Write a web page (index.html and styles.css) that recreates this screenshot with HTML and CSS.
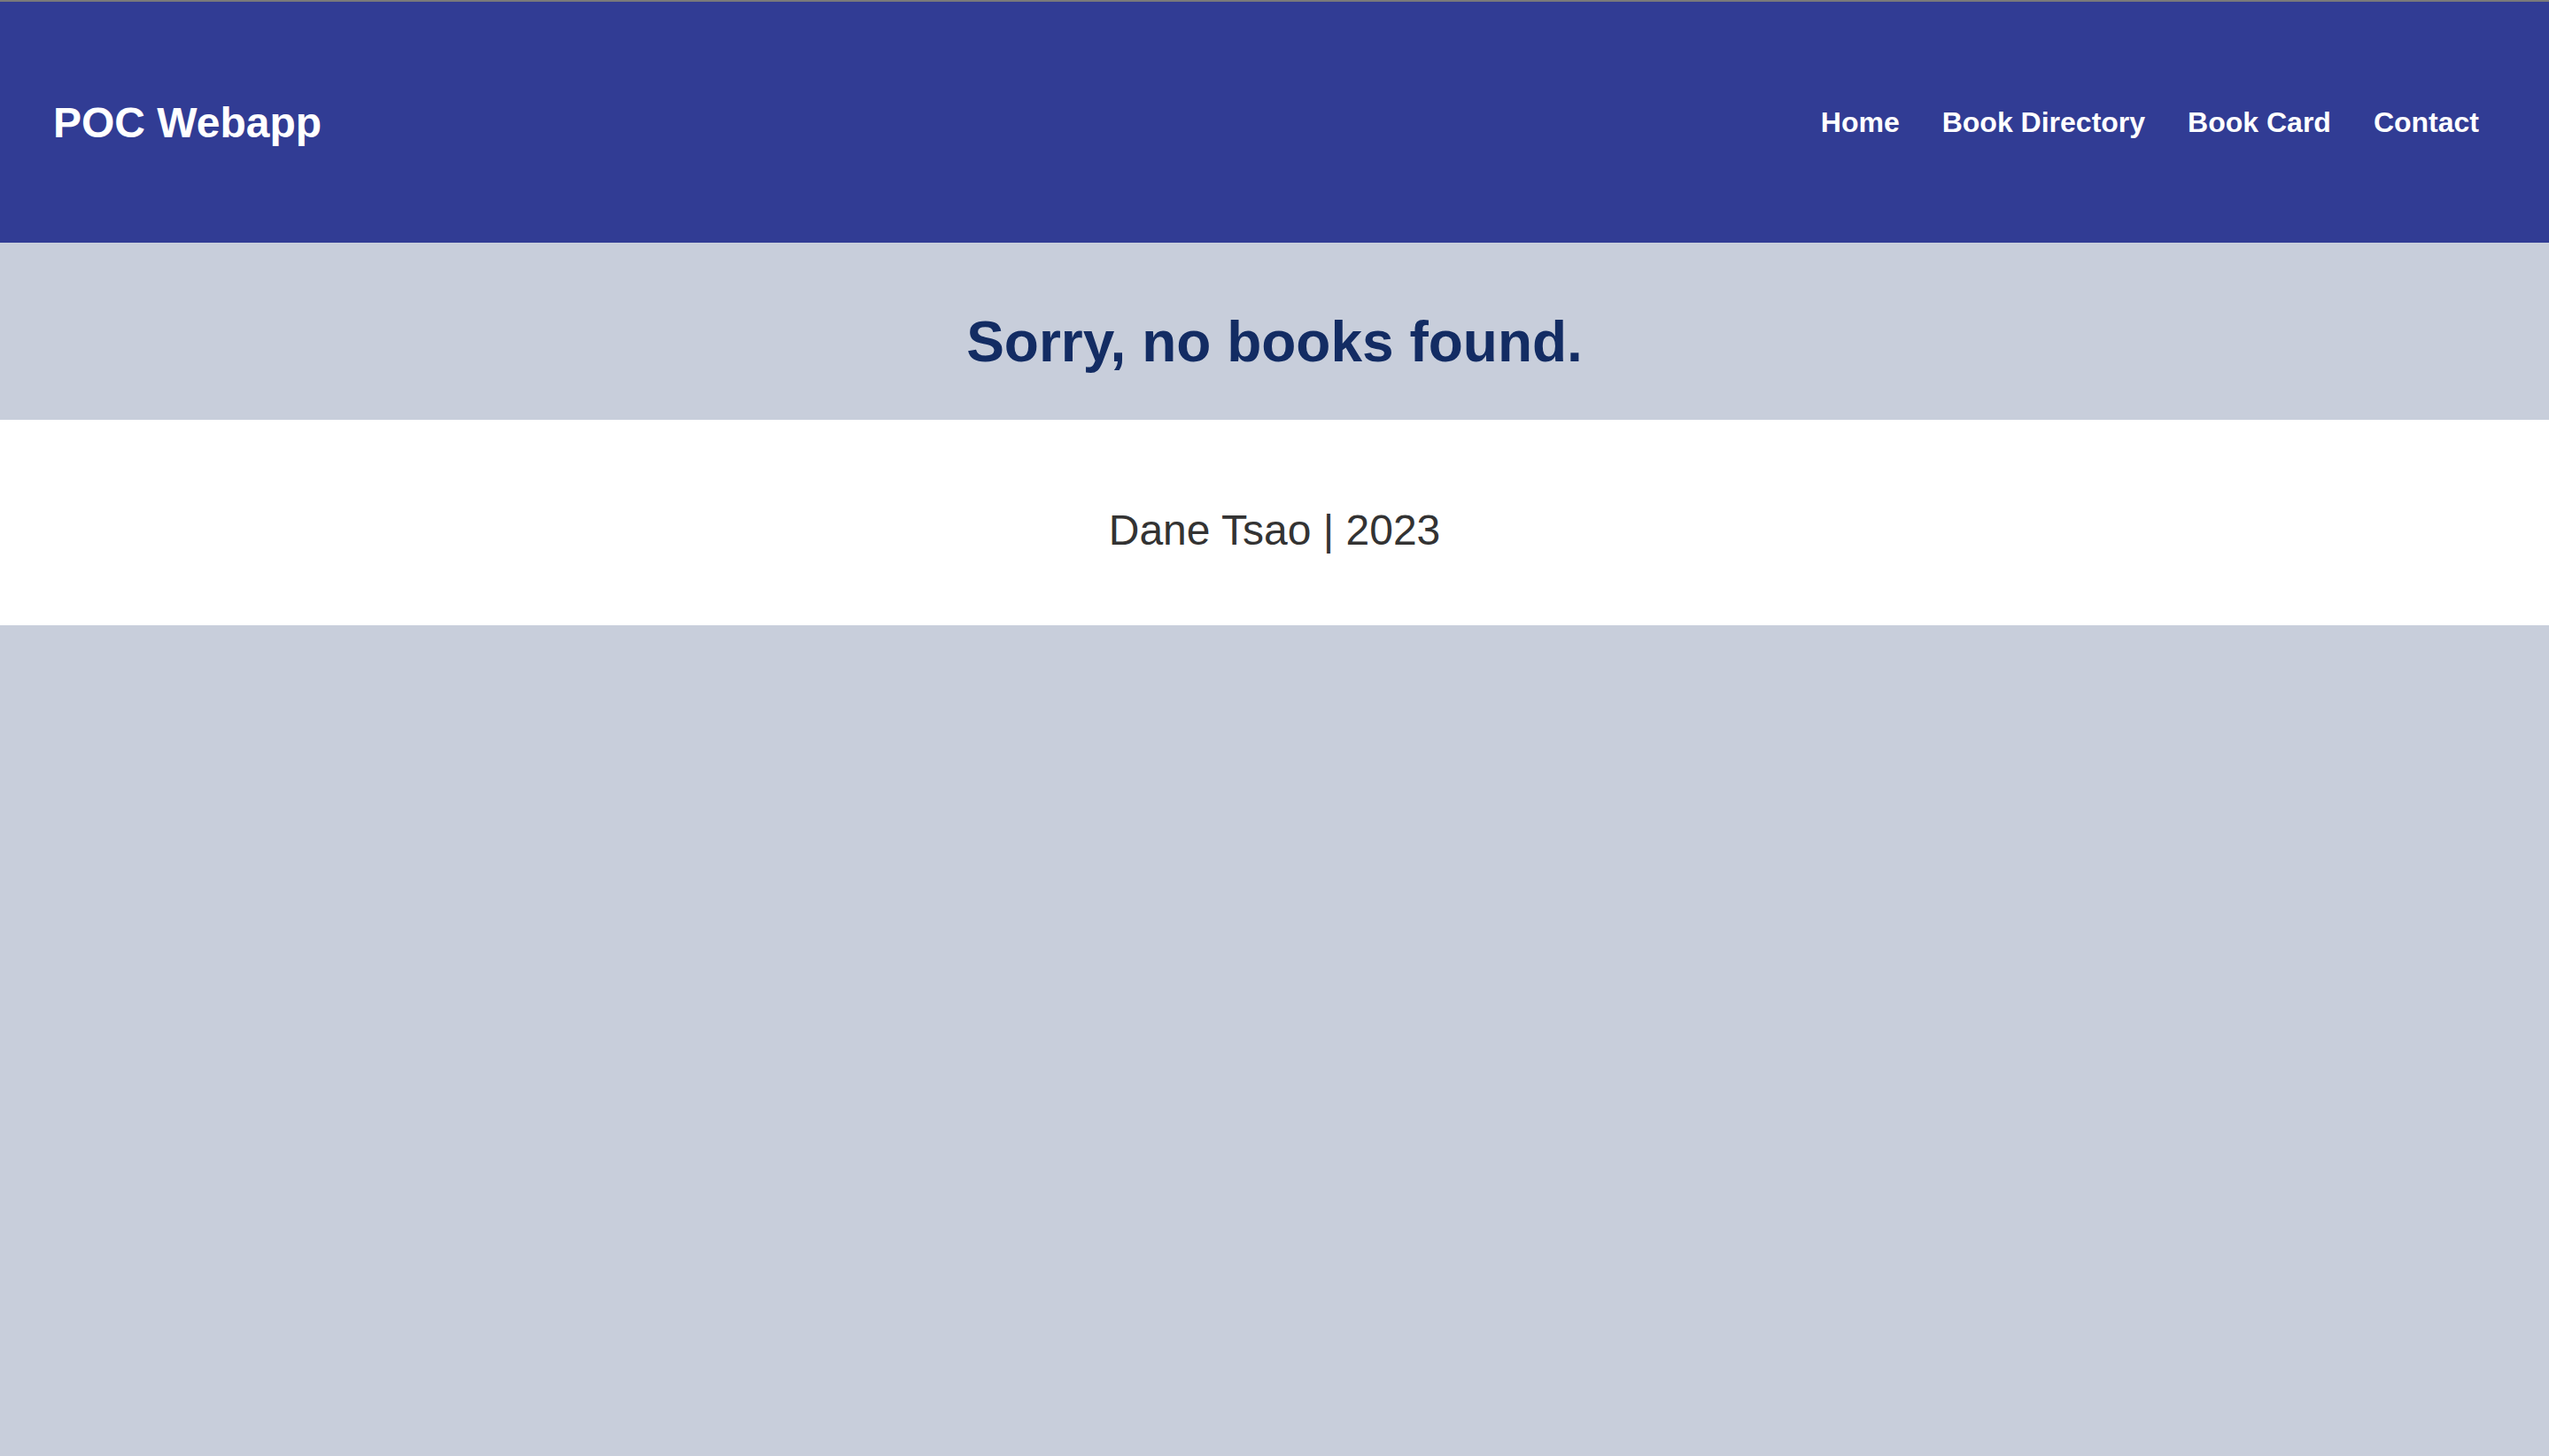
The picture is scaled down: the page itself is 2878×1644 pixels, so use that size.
FILE: index.html
```html
<!DOCTYPE html>
<html lang="en">
<head>
<meta charset="utf-8">
<title>POC Webapp</title>
<link rel="stylesheet" href="styles.css">
</head>
<body>
<header class="site-header">
  <div class="logo">POC Webapp</div>
  <nav class="nav">
    <a class="nav-link" href="#">Home</a>
    <a class="nav-link" href="#">Book Directory</a>
    <a class="nav-link" href="#">Book Card</a>
    <a class="nav-link" href="#">Contact</a>
  </nav>
</header>
<main class="notice">
  <h1 class="notice-title">Sorry, no books found.</h1>
</main>
<footer class="site-footer">
  <p class="footer-text">Dane Tsao | 2023</p>
</footer>
</body>
</html>
```

FILE: styles.css
```css
html, body {
  margin: 0;
  padding: 0;
}
body {
  background: #c8cedb;
  font-family: "Liberation Sans", Arial, Helvetica, sans-serif;
  border-top: 2px solid #7a7a7a;
}
.site-header {
  background: #313c94;
  height: 272px;
  display: flex;
  align-items: center;
  justify-content: space-between;
  padding: 0 79px 0 60px;
}
.logo {
  color: #ffffff;
  font-weight: 700;
  font-size: 48px;
}
.nav {
  display: flex;
  gap: 48px;
}
.nav-link {
  color: #ffffff;
  text-decoration: none;
  font-weight: 700;
  font-size: 32px;
}
.notice {
  background: #c8cedb;
  padding: 75px 0 51px;
}
.notice-title {
  margin: 0;
  text-align: center;
  font-size: 64px;
  font-weight: 700;
  color: #132c63;
  line-height: normal;
}
.site-footer {
  background: #ffffff;
  padding: 97px 0 80px;
}
.footer-text {
  margin: 0;
  text-align: center;
  font-size: 48px;
  color: #333333;
  line-height: normal;
}
```
